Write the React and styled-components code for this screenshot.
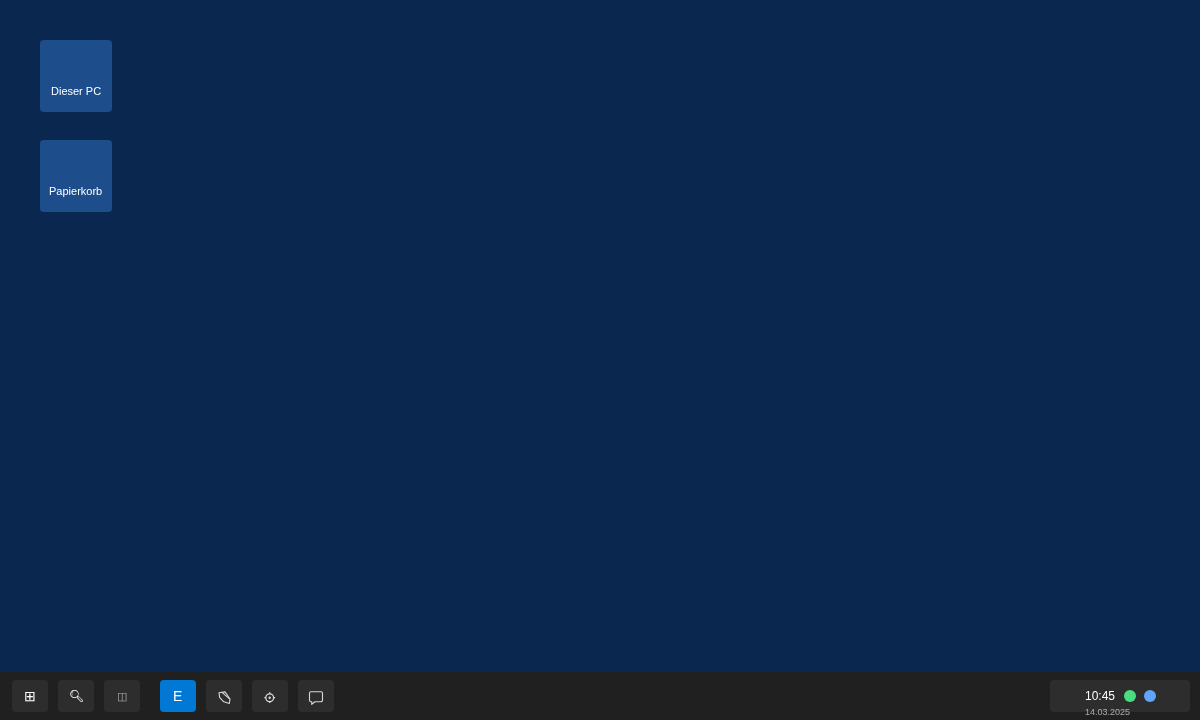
import React from 'react';
import styled, {createGlobalStyle} from 'styled-components';

const GlobalStyle = createGlobalStyle`
    html, body, #root {
        margin: 0;
        height: 100%;
    }
    body {
        font-family: "Liberation Sans", Arial, sans-serif;
        overflow: hidden;
    }
`;

const Screen = styled.div`
    width: 1200px;
    height: 720px;
    display: flex;
    flex-direction: column;
    background: #0a2750;
`;

const Desktop = styled.div`
    flex: 1;
    display: flex;
    flex-direction: column;
    gap: 28px;
    padding: 40px;
`;

const DesktopIcon = styled.div`
    width: 72px;
    height: 72px;
    box-sizing: border-box;
    padding-bottom: 14px;
    display: flex;
    align-items: flex-end;
    justify-content: center;
    background: #1e4d8c;
    border-radius: 4px;
    color: #fff;
    font-size: 11px;
    line-height: 13px;
`;

/* keeps the text on its own transparent layer, so it is smoothed in grey */
const Label = styled.span`
    will-change: transform;
    opacity: ${props => props.$dim ? 0.6 : 1};
`;

const Taskbar = styled.div`
    height: 48px;
    box-sizing: border-box;
    padding: 8px 10px 8px 12px;
    display: flex;
    align-items: flex-start;
    background: #202020;
`;

const Group = styled.div`
    display: flex;
    gap: 10px;
    margin-right: ${props => props.$last ? 'auto' : '20px'};
`;

const TaskButton = styled.div`
    width: 36px;
    height: 32px;
    display: flex;
    align-items: center;
    justify-content: center;
    border-radius: 4px;
    background: ${props => props.$active ? '#0078d4' : '#2d2d2d'};
    color: #fff;
    font-size: ${props => props.$size || 14}px;
`;

const Icon = styled.svg.attrs({viewBox: '0 0 20 20', width: 20, height: 20})`
    fill: none;
    stroke: #d8d8d8;
    stroke-width: ${props => props.$weight || 1.1};
    stroke-linejoin: round;
`;

const Tray = styled.div`
    position: relative;
    width: 140px;
    height: 32px;
    box-sizing: border-box;
    padding-left: 35px;
    display: flex;
    align-items: center;
    gap: 8px;
    background: #2d2d2d;
    border-radius: 4px;
    color: #fff;
`;

const Time = styled.div`
    width: 31px;
    font-size: 12px;
    line-height: 14px;
    will-change: transform;
`;

const DateLabel = styled.div`
    position: absolute;
    left: 35px;
    top: 27px;
    font-size: 9px;
    line-height: 11px;
    color: rgba(255, 255, 255, 0.6);
    will-change: transform;
`;

const Dot = styled.div`
    width: 12px;
    height: 12px;
    border-radius: 50%;
    background: ${props => props.$color};
`;

export default function App() {
    return (
        <Screen>
            <GlobalStyle/>
            <Desktop>
                <DesktopIcon><Label>Dieser PC</Label></DesktopIcon>
                <DesktopIcon><Label>Papierkorb</Label></DesktopIcon>
            </Desktop>
            <Taskbar>
                <Group>
                    <TaskButton><Label>⊞</Label></TaskButton>
                    <TaskButton $size={12}><Label>🔍︎</Label></TaskButton>
                    <TaskButton $size={11}><Label $dim>◫</Label></TaskButton>
                </Group>
                <Group $last>
                    <TaskButton $active><Label>E</Label></TaskButton>
                    <TaskButton>
                        <Icon>
                            <path d="M5 6.8l6-.9 5 7.1-.7 4.5-5.5-1.7-4.2-4.4z"/>
                            <path d="M8 6.4l7.8 6.7"/>
                        </Icon>
                    </TaskButton>
                    <TaskButton>
                        <Icon $weight={1.3}>
                            <circle cx="9.7" cy="11.7" r="3.9"/>
                            <circle cx="9.7" cy="11.7" r="1.2" fill="#d8d8d8" stroke="none"/>
                            <path d="M9.7 6.3v1.4M9.7 15.7v1.4M4.3 11.7h1.4M13.7 11.7h1.4"/>
                        </Icon>
                    </TaskButton>
                    <TaskButton>
                        <Icon>
                            <path d="M5 5.7h10a1.5 1.5 0 0 1 1.5 1.5v7a1.5 1.5 0 0 1-1.5 1.5H9l-3.3 2.6.1-2.6H5a1.5 1.5 0 0 1-1.5-1.5v-7A1.5 1.5 0 0 1 5 5.7z"/>
                        </Icon>
                    </TaskButton>
                </Group>
                <Tray>
                    <Time>10:45</Time>
                    <Dot $color="#4ade80"/>
                    <Dot $color="#60a5fa"/>
                    <DateLabel>14.03.2025</DateLabel>
                </Tray>
            </Taskbar>
        </Screen>
    );
}
